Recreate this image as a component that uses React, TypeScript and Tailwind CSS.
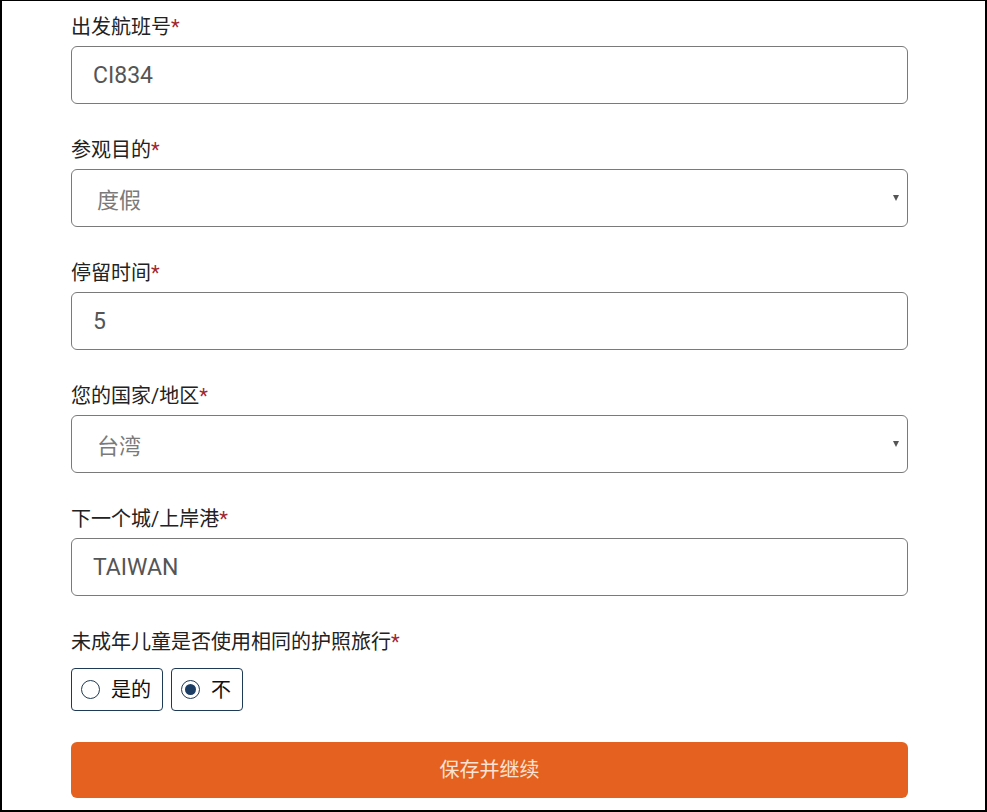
import React, { useState } from 'react';

const FONT = "font-['Roboto','Noto_Sans_CJK_SC',sans-serif]";

const Label: React.FC<{ text: string }> = ({ text }) => (
  <label className="block text-[20px] leading-[28px] text-[#222] mb-[5px]">
    {text}
    <span className="text-[#a3262f]">*</span>
  </label>
);

const TextField: React.FC<{ label: string; value: string }> = ({ label, value }) => (
  <div className="mb-[32px]">
    <Label text={label} />
    <input
      defaultValue={value}
      className="block w-full h-[58px] rounded-[6px] border border-[#7a7a7a] bg-white pl-[21px] text-[23px] text-[#555] outline-none"
    />
  </div>
);

const SelectField: React.FC<{ label: string; value: string }> = ({ label, value }) => (
  <div className="mb-[32px]">
    <Label text={label} />
    <div className="relative">
      <select
        defaultValue={value}
        className="block w-full h-[58px] appearance-none rounded-[6px] border border-[#7a7a7a] bg-white pl-[25px] pt-[5px] text-[22px] text-[#7a7a7a] outline-none"
      >
        <option value={value}>{value}</option>
      </select>
      {/* dropdown caret */}
      <span className="pointer-events-none absolute right-[9px] top-1/2 -translate-y-1/2 h-0 w-0 border-l-[3.5px] border-r-[3.5px] border-t-[6px] border-l-transparent border-r-transparent border-t-[#555]" />
    </div>
  </div>
);

const Radio: React.FC<{ label: string; checked: boolean; onClick: () => void; width: string }> = ({
  label,
  checked,
  onClick,
  width,
}) => (
  <button
    type="button"
    onClick={onClick}
    className={`flex h-[43px] items-center rounded-[4px] border border-[#1f3a55] bg-white pl-[9px] ${width}`}
  >
    <span className="flex h-[19px] w-[19px] items-center justify-center rounded-full border border-[#1f3a55] bg-white">
      {checked && <span className="h-[11px] w-[11px] rounded-full bg-[#1b3c63]" />}
    </span>
    <span className="ml-[11px] text-[20px] leading-none text-[#111]">{label}</span>
  </button>
);

export default function App() {
  const [minorSame, setMinorSame] = useState<'yes' | 'no'>('no');

  return (
    <div className={`${FONT} h-[812px] w-[987px] overflow-hidden border-t border-l-2 border-r-2 border-b-2 border-black bg-white`}>
      <div className="ml-[69px] w-[837px] pt-[12px]">
        <TextField label="出发航班号" value="CI834" />
        <SelectField label="参观目的" value="度假" />
        <TextField label="停留时间" value="5" />
        <SelectField label="您的国家/地区" value="台湾" />
        <TextField label="下一个城/上岸港" value="TAIWAN" />

        <div>
          <Label text="未成年儿童是否使用相同的护照旅行" />
          <div className="mt-[12px] flex gap-[8px]">
            <Radio label="是的" width="w-[92px]" checked={minorSame === 'yes'} onClick={() => setMinorSame('yes')} />
            <Radio label="不" width="w-[72px]" checked={minorSame === 'no'} onClick={() => setMinorSame('no')} />
          </div>
        </div>

        <button
          type="button"
          className="mt-[31px] block h-[56px] w-full rounded-[6px] bg-[#e4611f] text-[20px] text-[#fbe2d4]"
        >
          保存并继续
        </button>
      </div>
    </div>
  );
}
